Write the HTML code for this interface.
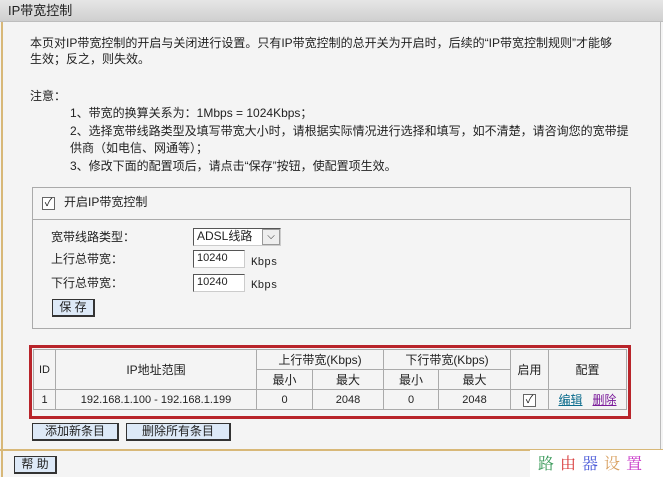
<!DOCTYPE html>
<html><head><meta charset="utf-8"><style>
*{margin:0;padding:0;box-sizing:border-box}
body{width:663px;height:477px;background:#f4f4f4;font-family:"Liberation Sans","Noto Sans CJK SC",sans-serif;font-size:12px;color:#222;position:relative;overflow:hidden}
.a{position:absolute;white-space:nowrap;line-height:14px}
.title{position:absolute;left:0;top:0;width:663px;height:22px;background:linear-gradient(#e6e6e6,#cfcfcf);border-bottom:1px solid #bdbdbd}
.lb{position:absolute;left:1px;top:22px;width:2px;height:455px;background:#d8b878}
.rb{position:absolute;left:660px;top:22px;width:1px;height:428px;background:#bbb}
.btn{position:absolute;background:#dde9f7;border:1px solid #333;border-bottom-width:2px;border-right-width:2px;text-align:center;line-height:14px;font-size:12px}
.inp{position:absolute;background:#fff;border:1px solid #555;border-right-color:#ccc;border-bottom-color:#ccc;padding-left:3px;line-height:15px;font-size:11px}
.cb{position:absolute;width:13px;height:13px;border:1px solid #666;background:#fff;font-size:11px;line-height:11px;text-align:center}
table{border-collapse:collapse;position:absolute;left:33px;top:349px;width:594px}
td{border:1px solid #aaa;text-align:center;font-size:12px;height:20px;padding:0;background:#f4f4f4}
</style></head><body>
<div class="title"></div>
<div class="a" style="left:8px;top:4px;font-size:13px">IP带宽控制</div>
<div class="lb"></div><div class="rb"></div>
<div class="a" style="left:30px;top:36px">本页对IP带宽控制的开启与关闭进行设置。只有IP带宽控制的总开关为开启时，后续的“IP带宽控制规则”才能够</div>
<div class="a" style="left:30px;top:52px">生效；反之，则失效。</div>
<div class="a" style="left:30px;top:89px">注意：</div>
<div class="a" style="left:70px;top:106px">1、带宽的换算关系为：1Mbps = 1024Kbps；</div>
<div class="a" style="left:70px;top:124px">2、选择宽带线路类型及填写带宽大小时，请根据实际情况进行选择和填写，如不清楚，请咨询您的宽带提</div>
<div class="a" style="left:70px;top:141px">供商（如电信、网通等）；</div>
<div class="a" style="left:70px;top:159px">3、修改下面的配置项后，请点击“保存”按钮，使配置项生效。</div>
<div style="position:absolute;left:32px;top:187px;width:599px;height:142px;border:1px solid #aaa"></div>
<div style="position:absolute;left:33px;top:219px;width:597px;height:1px;background:#aaa"></div>
<div class="cb" style="left:42px;top:197px">✓</div>
<div class="a" style="left:64px;top:195px">开启IP带宽控制</div>
<div class="a" style="left:51px;top:230px">宽带线路类型：</div>
<div class="a" style="left:51px;top:252px">上行总带宽：</div>
<div class="a" style="left:51px;top:276px">下行总带宽：</div>
<div class="inp" style="left:193px;top:228px;width:88px;height:18px;font-size:12px">ADSL线路</div>
<div style="position:absolute;left:262px;top:229px;width:18px;height:16px;border:1px solid #999;background:#eee;font-size:10px;text-align:center;line-height:14px">⌵</div>
<div class="inp" style="left:193px;top:250px;width:52px;height:18px">10240</div>
<div class="inp" style="left:193px;top:274px;width:52px;height:18px">10240</div>
<div class="a" style="left:251px;top:256px;font-size:11px;font-family:'Liberation Mono',monospace">Kbps</div>
<div class="a" style="left:251px;top:279px;font-size:11px;font-family:'Liberation Mono',monospace">Kbps</div>
<div class="btn" style="left:52px;top:299px;width:43px;height:18px">保 存</div>
<div style="position:absolute;left:29px;top:345px;width:602px;height:74px;border:3px solid #b8242a"></div>
<table>
<tr><td rowspan="2" style="width:22px;font-size:11px">ID</td><td rowspan="2" style="width:201px">IP地址范围</td><td colspan="2">上行带宽(Kbps)</td><td colspan="2">下行带宽(Kbps)</td><td rowspan="2" style="width:38px">启用</td><td rowspan="2">配置</td></tr>
<tr><td style="width:56px">最小</td><td style="width:71px">最大</td><td style="width:55px">最小</td><td style="width:72px">最大</td></tr>
<tr><td style="font-size:11px">1</td><td style="font-size:11px">192.168.1.100 - 192.168.1.199</td><td style="font-size:11px">0</td><td style="font-size:11px">2048</td><td style="font-size:11px">0</td><td style="font-size:11px">2048</td><td><span style="display:inline-block;width:13px;height:13px;border:1px solid #666;background:#fff;font-size:11px;line-height:11px;vertical-align:middle">✓</span></td><td><span style="color:#0a6b8c;text-decoration:underline">编辑</span>&nbsp;&nbsp;&nbsp;<span style="color:#7a1a9a;text-decoration:underline">删除</span></td></tr>
</table>
<div class="btn" style="left:32px;top:423px;width:87px;height:18px">添加新条目</div>
<div class="btn" style="left:126px;top:423px;width:105px;height:18px">删除所有条目</div>
<div style="position:absolute;left:0;top:449px;width:663px;height:2px;background:#d8b878"></div>
<div class="btn" style="left:14px;top:456px;width:43px;height:18px">帮 助</div>
<div style="position:absolute;left:530px;top:450px;width:133px;height:27px;background:#fff"></div>
<div class="a" style="left:538px;top:454px;font-size:16px;letter-spacing:6px;font-family:'Noto Serif CJK SC',serif;line-height:18px"><span style="color:#3a9a5a">路</span><span style="color:#d83838">由</span><span style="color:#4a5ad8">器</span><span style="color:#d8a060">设</span><span style="color:#c838c8">置</span></div>
</body></html>
